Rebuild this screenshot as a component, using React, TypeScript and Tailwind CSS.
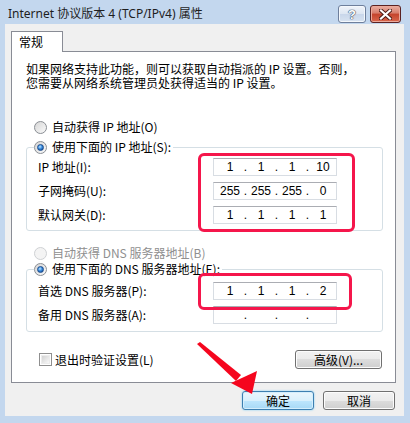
import React from "react";

const cjk = "font-['Noto_Sans_CJK_SC','Noto_Sans',sans-serif]";

function Radio({ checked, disabled }: { checked?: boolean; disabled?: boolean }) {
  return (
    <span
      className={`w-[13px] h-[13px] rounded-full border flex items-center justify-center shrink-0 ${
        disabled
          ? "border-[#cfd1d4] bg-[#f4f4f4]"
          : "border-[#8a8e94] bg-[linear-gradient(135deg,#d6d6d6,#fafafa)]"
      }`}
    >
      {checked && (
        <span className="w-[7px] h-[7px] rounded-full border border-[#1c4c8c] bg-[radial-gradient(circle_at_40%_35%,#bfe6ff,#3a8de0_45%,#0b3a82)]" />
      )}
    </span>
  );
}

function IpBox({ parts }: { parts: string[] }) {
  return (
    <div className="w-[124px] h-[18px] border border-[#d8dde3] border-t-[#abadb3] bg-white flex items-center pl-[4px] font-['Liberation_Sans',sans-serif] text-[12px] leading-none text-black">
      {parts.map((p, i) => (
        <React.Fragment key={i}>
          <span className="w-[24px] text-center">{p}</span>
          {i < 3 && <span className="w-[7px] text-center">.</span>}
        </React.Fragment>
      ))}
    </div>
  );
}

function Row({ label, parts }: { label: string; parts: string[] }) {
  return (
    <div className="flex items-center h-[18px] ml-[4px]">
      <span className="w-[175px] text-[12px] leading-none">{label}</span>
      <IpBox parts={parts} />
    </div>
  );
}

function WinButton({ label, w, focus }: { label: string; w: string; focus?: boolean }) {
  return (
    <button
      className={`${w} h-[19px] rounded-[3px] border text-[12px] leading-none text-black flex items-center justify-center ${
        focus
          ? "border-[#3c7fb1] bg-[linear-gradient(#eaf6fd,#d9f0fc_50%,#bee6fd_50%,#a7d9f5)] shadow-[inset_0_0_0_1px_#d4eefc,0_0_2px_#6fc8f5]"
          : "border-[#707070] bg-[linear-gradient(#f2f2f2,#ebebeb_50%,#dddddd_50%,#cfcfcf)] shadow-[inset_0_0_0_1px_#fcfcfc]"
      }`}
    >
      {label}
    </button>
  );
}

export default function App() {
  return (
    <div className={`relative w-[410px] h-[423px] overflow-hidden bg-[#c3d7ee] ${cjk} text-black`}>
      {/* title bar */}
      <div className="h-[24px] flex items-start pt-[5px] pl-[8px] pr-[9px]">
        <span className="flex-1 leading-[18px] text-[12px] font-['Noto_Sans','Noto_Sans_CJK_SC',sans-serif] text-[#1e1e1e]">
          Internet 协议版本 4 (TCP/IPv4) 属性
        </span>
        <div className="flex gap-[4px]">
          <div className="w-[28px] h-[18px] rounded-[3px] border border-[#6e7f9c] bg-[linear-gradient(#f0f4fa,#dde6f2_50%,#c8d6ea_50%,#d8e3f1)] shadow-[inset_0_0_0_1px_#f4f8fc] flex items-center justify-center">
            <span className="text-[13px] font-bold leading-none text-white font-['Liberation_Sans',sans-serif] [text-shadow:0_0_1px_#34425c,0_0_1px_#34425c,0_0_1px_#34425c]">
              ?
            </span>
          </div>
          <div className="w-[31px] h-[18px] rounded-[3px] border border-[#5b2222] bg-[linear-gradient(#eab0a4,#d77c6a_45%,#c4432c_50%,#d9674d)] shadow-[inset_0_0_0_1px_#eba99a] flex items-center justify-center">
            <svg width="13" height="11" viewBox="0 0 13 11">
              <path d="M2 1.5 L11 9.5 M11 1.5 L2 9.5" stroke="#4b1a14" strokeWidth="4" strokeLinecap="square" />
              <path d="M2 1.5 L11 9.5 M11 1.5 L2 9.5" stroke="#ffffff" strokeWidth="2.2" strokeLinecap="square" />
            </svg>
          </div>
        </div>
      </div>

      {/* client area */}
      <div className="ml-[5px] w-[399px] h-[392px] bg-[#f0f0f0] flex flex-col">
        <div className="flex pl-[6px] pt-[7px]">
          <div className="relative z-10 -mb-px h-[21px] w-[52px] bg-white border border-b-0 border-[#898c95] pl-[7px] flex items-center text-[12px] leading-none">
            常规
          </div>
        </div>
        <div className="ml-[6px] w-[385px] h-[332px] bg-white border border-[#898c95] flex flex-col">
          <p className="pt-[10px] pl-[14px] text-[12px] leading-[14px] whitespace-nowrap">
            如果网络支持此功能，则可以获取自动指派的 IP 设置。否则，
            <br />
            您需要从网络系统管理员处获得适当的 IP 设置。
          </p>

          <div className="mt-[29px] ml-[22px] h-[16px] flex items-center gap-[5px] text-[12px] leading-none">
            <Radio />
            <span>自动获得 IP 地址(O)</span>
          </div>

          <fieldset className="mt-[4px] ml-[14px] w-[357px] border border-[#d5dfe5] rounded-[3px] pl-[7px] pt-[3px] pb-[6px] flex flex-col gap-[6px]">
            <legend className="h-[16px] pr-[2px] flex items-center gap-[5px] text-[12px] leading-none">
              <Radio checked />
              <span>使用下面的 IP 地址(S):</span>
            </legend>
            <Row label="IP 地址(I):" parts={["1", "1", "1", "10"]} />
            <Row label="子网掩码(U):" parts={["255", "255", "255", "0"]} />
            <Row label="默认网关(D):" parts={["1", "1", "1", "1"]} />
          </fieldset>

          <div className="mt-[14px] ml-[22px] h-[16px] flex items-center gap-[5px] text-[12px] leading-none text-[#8f8f8f]">
            <Radio disabled />
            <span>自动获得 DNS 服务器地址(B)</span>
          </div>

          <fieldset className="ml-[14px] w-[357px] border border-[#d5dfe5] rounded-[3px] pl-[7px] pt-[5px] pb-[7px] flex flex-col gap-[6px]">
            <legend className="h-[16px] pr-[2px] flex items-center gap-[5px] text-[12px] leading-none">
              <Radio checked />
              <span>使用下面的 DNS 服务器地址(E):</span>
            </legend>
            <Row label="首选 DNS 服务器(P):" parts={["1", "1", "1", "2"]} />
            <Row label="备用 DNS 服务器(A):" parts={["", "", "", ""]} />
          </fieldset>

          <div className="mt-[18px] pl-[27px] pr-[13px] flex items-center justify-between">
            <div className="flex items-center gap-[3px] text-[12px] leading-none">
              <span className="w-[13px] h-[13px] border border-[#8f8f8f] bg-white p-px flex">
                <span className="flex-1 border border-[#ececec] bg-[linear-gradient(135deg,#d2d2d2,#f8f8f8)]" />
              </span>
              <span>退出时验证设置(L)</span>
            </div>
            <WinButton label="高级(V)..." w="w-[87px]" />
          </div>
        </div>

        <div className="mt-[8px] pr-[9px] flex justify-end gap-[9px]">
          <WinButton label="确定" w="w-[72px]" focus />
          <WinButton label="取消" w="w-[72px]" />
        </div>
      </div>

      {/* annotations */}
      <div className="absolute left-[198px] top-[153px] w-[157px] h-[79px] border-[3px] border-[#f5164b] rounded-[6px] pointer-events-none" />
      <div className="absolute left-[198px] top-[273px] w-[154px] h-[37px] border-[3px] border-[#f5164b] rounded-[6px] pointer-events-none" />
      <svg className="absolute left-0 top-0 pointer-events-none" width="410" height="423" viewBox="0 0 410 423">
        <polygon points="197,344 200,342 241,375 236,381" fill="#f5061e" />
        <polygon points="252,394 257,371 231,383" fill="#f5061e" />
      </svg>
    </div>
  );
}
